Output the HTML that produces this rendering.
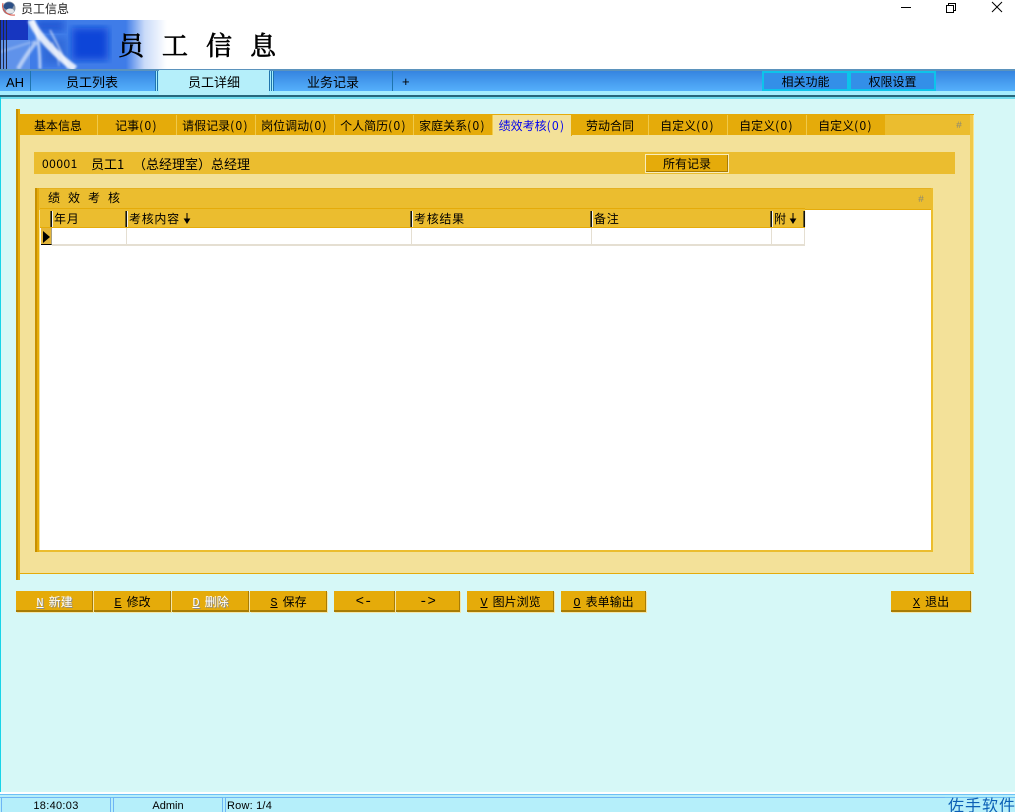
<!DOCTYPE html>
<html><head><meta charset="utf-8"><style>
html,body{margin:0;padding:0;width:1015px;height:812px;overflow:hidden;background:#d6f8f7}
body{position:relative;font:12px/14px "WenQuanYi Zen Hei","Noto Sans CJK SC",sans-serif;color:#000}
.a,.t,.b,.h,.c{position:absolute;box-sizing:border-box;white-space:nowrap}
.t{top:115px;height:20px;background:#e5ab0a;text-align:center;line-height:21px;border-right:1px solid #f0c94a;padding-right:1px}
.t i{font-style:normal;letter-spacing:1.300px}
.b{top:591px;height:21px;background:#e5ab0a;text-align:center;line-height:21px;border-right:1px solid #a87c05;border-bottom:2px solid #a87c05;box-shadow:1px 1px 0 #f5e6a8}
.b u{font:12px/14px "Liberation Mono",monospace;margin-right:6px;position:relative;left:1px}
.b.d{color:#fff;text-shadow:1px 1px 0 #8a8a8a}
.h{top:210px;height:18px;line-height:17px;padding-left:3px;letter-spacing:.7px}
.s{position:absolute;top:211px;width:1px;height:16px;background:#111;box-shadow:1px 0 0 #f4f4ee,-1px 0 0 #6b5c20}
.c{top:228px;height:18px;background:#fff;border-right:1px solid #e5dfd2;border-bottom:2px solid #e5dfd2}
.n{font-size:13px;line-height:16px}
</style></head><body>

<!-- title bar and banner background -->
<div class="a" style="left:0;top:0;width:1015px;height:69px;background:#fff"></div>
<svg class="a" style="left:1px;top:0" width="16" height="16" viewBox="0 0 16 16"><circle cx="8" cy="8" r="6.500" fill="#8a97a8"/><path d="M3 8a5 4 0 0 1 10-3l-2 4-5 1z" fill="#2b4f86"/><ellipse cx="9" cy="11" rx="4" ry="2.500" fill="#e4e7ea"/><path d="M2 3c-2 7 4 13 12 12" fill="none" stroke="#d8564a" stroke-width="1"/></svg>
<div class="a" style="left:21px;top:2px;color:#222">员工信息</div>
<svg class="a" style="left:900px;top:0" width="115" height="16" viewBox="0 0 115 16" fill="none" stroke="#000" stroke-width="1"><path d="M1 7.500H11"/><path d="M46.500 5.500h7v7h-7z"/><path d="M48.500 5.500v-2h7v7h-2"/><path d="M92 2 L102 12M102 2 L92 12"/></svg>

<!-- banner -->
<div class="a" style="left:0;top:20px;width:170px;height:49px;overflow:hidden;background:#fff">
<svg width="170" height="49" viewBox="0 0 170 49">
<defs>
<linearGradient id="f" x1="0" x2="1"><stop offset="0" stop-color="#fff" stop-opacity="0"/><stop offset=".74" stop-color="#fff" stop-opacity="0"/><stop offset=".85" stop-color="#fff" stop-opacity=".72"/><stop offset=".98" stop-color="#fff"/></linearGradient>
<filter id="bl"><feGaussianBlur stdDeviation="1"/></filter>
<filter id="bl2"><feGaussianBlur stdDeviation="4"/></filter>
</defs>
<rect width="170" height="49" fill="#3f7ce8"/>
<rect x="0" y="20" width="30" height="29" fill="#5f92ea"/>
<rect x="0" y="0" width="28" height="20" fill="#1736c0"/>
<rect x="72" y="8" width="36" height="32" fill="#0f44d8" filter="url(#bl2)"/>
<rect x="36" y="0" width="28" height="12" fill="#2258d4" filter="url(#bl2)"/>
<rect x="42" y="18" width="24" height="26" fill="#2f68d8" filter="url(#bl2)"/>
<g filter="url(#bl)" stroke="#fff" fill="none">
<path d="M31 0 C37 16 60 38 75 49" stroke-width="7" stroke-opacity=".85"/>
<path d="M33 0 C38 14 40 30 40 49" stroke-width="3" stroke-opacity=".6"/>
<path d="M50 10 C56 22 64 36 68 49" stroke-width="1.800" stroke-opacity=".6"/>
<path d="M0 32 C14 28 24 24 36 21" stroke-width="2" stroke-opacity=".3"/>
<path d="M18 49 C24 38 30 30 36 22" stroke-width="4" stroke-opacity=".55"/>
<path d="M52 22 C56 30 58 38 59 46" stroke-width="1.200" stroke-opacity=".5"/>
</g>
<rect x="0" y="0" width="1" height="49" fill="#202840"/><rect x="3" y="0" width="1" height="49" fill="#202840"/><rect x="6" y="0" width="1" height="49" fill="#202840"/>
<rect width="170" height="49" fill="url(#f)"/>
</svg></div>
<div class="a" style="left:118px;top:27px;font:26px/36px 'Noto Serif CJK SC',serif;letter-spacing:18px;color:#000;-webkit-text-stroke:.7px #000">员工信息</div>

<!-- nav bar -->
<div class="a" style="left:0;top:69px;width:1015px;height:2px;background:#5b93bd"></div>
<div class="a" style="left:0;top:71px;width:1015px;height:20px;background:linear-gradient(#3584e0,#55b0fb)"></div>
<div class="a" style="left:0;top:91px;width:1015px;height:4px;background:#a5edfd"></div>
<div class="a" style="left:0;top:95px;width:1015px;height:2px;background:#27677c"></div>
<div class="a" style="left:0;top:97px;width:1015px;height:2px;background:#6fdcee"></div>
<div class="a" style="left:6px;top:75px;font:13px/16px 'Liberation Sans',sans-serif">AH</div>
<div class="a" style="left:30px;top:71px;width:1px;height:20px;background:#1f74ad"></div>
<div class="a n" style="left:66px;top:74px">员工列表</div>
<div class="a" style="left:155px;top:71px;width:5px;height:20px;background:repeating-linear-gradient(90deg,#1f74ad 0 1px,#a5edfd 1px 2px)"></div>
<div class="a" style="left:159px;top:70px;width:110px;height:25px;background:#b5effa"></div>
<div class="a n" style="left:188px;top:74px">员工详细</div>
<div class="a" style="left:269px;top:71px;width:5px;height:20px;background:repeating-linear-gradient(90deg,#1f74ad 0 1px,#a5edfd 1px 2px)"></div>
<div class="a n" style="left:307px;top:74px">业务记录</div>
<div class="a" style="left:392px;top:71px;width:1px;height:20px;background:#1f74ad"></div>
<div class="a" style="left:402px;top:74px;font:13px/16px 'Liberation Sans',sans-serif">+</div>
<div class="a" style="left:762px;top:71px;width:87px;height:20px;background:#338fe8;border:2px solid #0cc4ea;text-align:center;line-height:17px">相关功能</div>
<div class="a" style="left:849px;top:71px;width:87px;height:20px;background:#338fe8;border:2px solid #0cc4ea;text-align:center;line-height:17px">权限设置</div>

<!-- left page edge -->
<div class="a" style="left:0;top:97px;width:1px;height:696px;background:#18d4e8"></div>

<!-- outer panel -->
<div class="a" style="left:16px;top:109px;width:2px;height:471px;background:#c79000"></div>
<div class="a" style="left:18px;top:109px;width:2px;height:471px;background:#e5ab0a"></div>
<div class="a" style="left:20px;top:114px;width:954px;height:1px;background:#e5ab0a"></div>
<div class="a" style="left:20px;top:115px;width:950px;height:458px;background:#f3e199"></div>
<div class="a" style="left:885px;top:115px;width:85px;height:20px;background:#ebbd2f"></div>
<div class="a" style="left:970px;top:115px;width:3px;height:458px;background:#f0c94a"></div>
<div class="a" style="left:973px;top:115px;width:1px;height:458px;background:#f8e48e"></div>
<div class="a" style="left:20px;top:573px;width:954px;height:1px;background:#e5ab0a"></div>
<div class="a" style="left:956px;top:121px;color:#8d8a70;font:10px/12px 'Liberation Mono',monospace">#</div>

<!-- tabs -->
<div class="t" style="left:20px;width:78px">基本信息</div>
<div class="t" style="left:98px;width:79px">记事<i>(0)</i></div>
<div class="t" style="left:177px;width:79px">请假记录<i>(0)</i></div>
<div class="t" style="left:256px;width:79px">岗位调动<i>(0)</i></div>
<div class="t" style="left:335px;width:79px">个人简历<i>(0)</i></div>
<div class="t" style="left:414px;width:79px">家庭关系<i>(0)</i></div>
<div class="t" style="left:493px;width:79px;background:#f3e199;color:#0000f0;border-right:1px solid #e5ab0a;border-left:1px solid #f8e48e;height:21px">绩效考核<i>(0)</i></div>
<div class="t" style="left:572px;width:77px;padding-right:0">劳动合同</div>
<div class="t" style="left:649px;width:79px">自定义<i>(0)</i></div>
<div class="t" style="left:728px;width:79px">自定义<i>(0)</i></div>
<div class="t" style="left:807px;width:78px;border-right:0">自定义<i>(0)</i></div>

<!-- info bar -->
<div class="a" style="left:34px;top:152px;width:921px;height:22px;background:#ebbd2f"></div>
<div class="a" style="left:42px;top:157px;letter-spacing:.5px">00001</div>
<div class="a" style="left:91px;top:157px;font-size:13px">员工1</div>
<div class="a" style="left:133px;top:157px;font-size:13px">（总经理室）</div>
<div class="a" style="left:211px;top:157px;font-size:13px">总经理</div>
<div class="a" style="left:645px;top:154px;width:84px;height:19px;background:#e5ab0a;border:1px solid #f8edbd;box-shadow:inset -1px -1px 0 #a87c05;text-align:center;line-height:18px">所有记录</div>

<!-- grid panel -->
<div class="a" style="left:35px;top:188px;width:2px;height:364px;background:#c79000"></div>
<div class="a" style="left:37px;top:188px;width:2px;height:364px;background:#e5ab0a"></div>
<div class="a" style="left:39px;top:188px;width:893px;height:22px;background:#ebbd2f;border-top:1px solid #e5b020"></div>
<div class="a" style="left:48px;top:191px;letter-spacing:8px">绩效考核</div>
<div class="a" style="left:918px;top:195px;color:#8d8a70;font:10px/12px 'Liberation Mono',monospace">#</div>
<div class="a" style="left:40px;top:210px;width:891px;height:340px;background:#fff"></div>
<div class="a" style="left:931px;top:188px;width:2px;height:364px;background:#ebbd2f"></div>
<div class="a" style="left:933px;top:190px;width:1px;height:362px;background:#f8e48e"></div>
<div class="a" style="left:39px;top:550px;width:894px;height:2px;background:#ebbd2f"></div>
<div class="a" style="left:40px;top:208px;width:765px;height:20px;background:#ebbd2f;border-top:1px solid #e5ab0a;border-bottom:1px solid #e5ab0a"></div>
<div class="a" style="left:805px;top:209px;width:126px;height:1px;background:#e5ab0a"></div>

<div class="s" style="left:51px"></div>
<div class="s" style="left:126px"></div>
<div class="s" style="left:411px"></div>
<div class="s" style="left:591px"></div>
<div class="s" style="left:771px"></div>
<div class="s" style="left:804px"></div>
<div class="h" style="left:51px">年月</div>
<div class="h" style="left:126px">考核内容</div>
<svg class="a" style="left:183px;top:212px" width="8" height="12" viewBox="0 0 8 12"><path d="M4 1V10M1.500 7L4 11 6.500 7z" stroke="#000" fill="#000" stroke-width="1"/></svg>
<div class="h" style="left:411px">考核结果</div>
<div class="h" style="left:591px">备注</div>
<div class="h" style="left:771px">附</div>
<svg class="a" style="left:789px;top:212px" width="8" height="12" viewBox="0 0 8 12"><path d="M4 1V10M1.500 7L4 11 6.500 7z" stroke="#000" fill="#000" stroke-width="1"/></svg>

<div class="a" style="left:41px;top:228px;width:11px;height:17px;background:#e3b53a;border-right:1px solid #a8a080;border-bottom:1px solid #000"></div>
<svg class="a" style="left:42px;top:231px" width="9" height="12"><path d="M1 0L8 6L1 12z" fill="#000"/></svg>
<div class="c" style="left:52px;width:75px"></div>
<div class="c" style="left:127px;width:285px"></div>
<div class="c" style="left:412px;width:180px"></div>
<div class="c" style="left:592px;width:180px"></div>
<div class="c" style="left:772px;width:33px"></div>

<!-- buttons -->
<div class="b d" style="left:16px;width:77px"><u>N</u>新建</div>
<div class="b" style="left:94px;width:77px"><u>E</u>修改</div>
<div class="b d" style="left:172px;width:77px"><u>D</u>删除</div>
<div class="b" style="left:250px;width:77px"><u>S</u>保存</div>
<div class="b" style="left:334px;width:61px;font:14px/23px 'Liberation Mono',monospace">&lt;-</div>
<div class="b" style="left:396px;width:64px;font:14px/23px 'Liberation Mono',monospace">-&gt;</div>
<div class="b" style="left:467px;width:87px"><u>V</u>图片浏览</div>
<div class="b" style="left:561px;width:85px"><u>O</u>表单输出</div>
<div class="b" style="left:891px;width:80px"><u>X</u>退出</div>

<!-- status bar -->
<div class="a" style="left:0;top:792px;width:1015px;height:2px;background:#fff"></div>
<div class="a" style="left:0;top:794px;width:1015px;height:18px;background:#b5effa;border-top:1px solid #6ec0f5"></div>
<div class="a" style="left:0;top:797px;width:1015px;height:1px;background:#6ec0f5"></div>
<div class="a" style="left:1px;top:797px;width:110px;height:15px;border:1px solid #6eb5f5;border-bottom:0;text-align:center;font:11px/16px 'Liberation Sans',sans-serif;letter-spacing:.3px">18:40:03</div>
<div class="a" style="left:113px;top:797px;width:110px;height:15px;border:1px solid #6eb5f5;border-bottom:0;text-align:center;font:11px/16px 'Liberation Sans',sans-serif">Admin</div>
<div class="a" style="left:225px;top:797px;padding-left:1px;width:720px;height:15px;border-left:1px solid #6eb5f5;border-top:1px solid #6eb5f5;font:11px/16px 'Liberation Sans',sans-serif;letter-spacing:.2px">Row: 1/4</div>
<div class="a" style="left:948px;top:796px;color:#0b5fb5;font-size:16px;line-height:17px;letter-spacing:1px">佐手软件</div>
</body></html>
